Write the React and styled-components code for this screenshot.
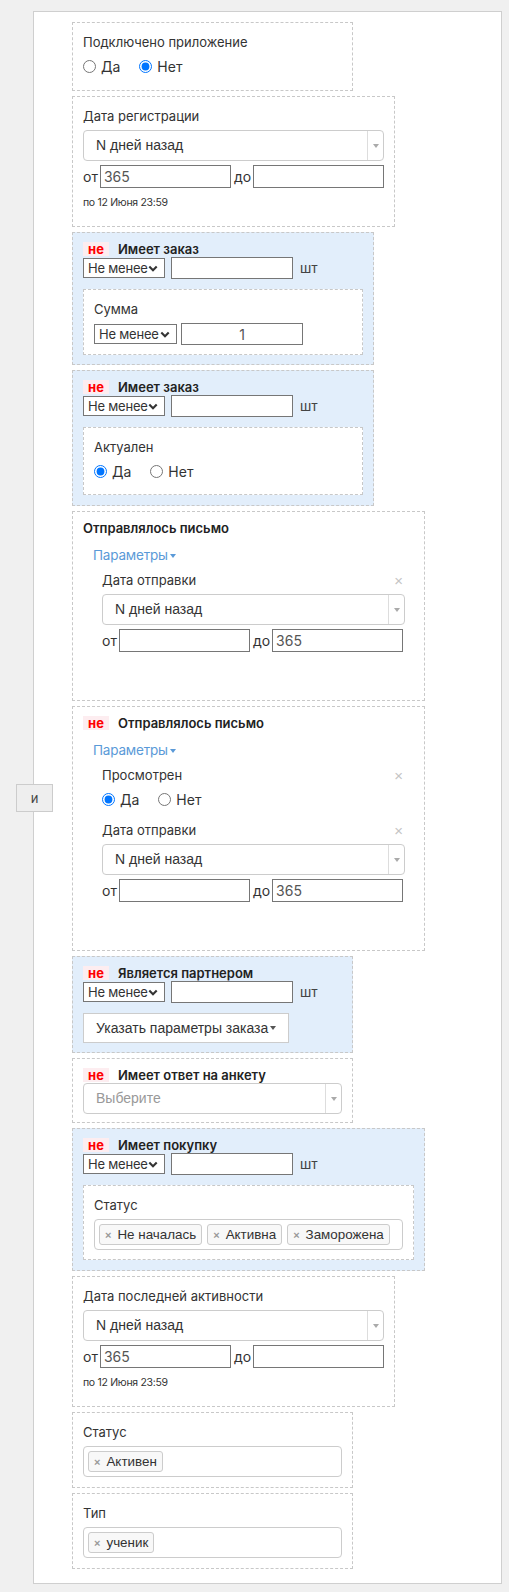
import React from 'react';
import styled, { createGlobalStyle } from 'styled-components';

const GlobalStyle = createGlobalStyle`
  body {
    margin: 0;
    background: #f0f0f0;
    font-family: Inter, "Noto Sans", sans-serif;
    color: #333;
  }
  * { box-sizing: border-box; }
`;

const Page = styled.div`
  padding: 11px 7px 3px 33px;
`;

const Panel = styled.div`
  position: relative;
  background: #fff;
  border: 1px solid #cfcfcf;
  padding: 10px 0 14px 38px;
`;

// "и" toggle sits over the panel's left edge
const AndButton = styled.div`
  position: absolute;
  left: -18px;
  top: 50%;
  transform: translateY(-50%);
  width: 37px;
  height: 28px;
  border: 1px solid #ccc;
  background: #eee;
  display: flex;
  align-items: center;
  justify-content: center;
  font-size: 13px;
  color: #444;
`;

const Stack = styled.div`
  display: flex;
  flex-direction: column;
  align-items: flex-start;
  gap: 5px;
`;

const Block = styled.div`
  width: ${p => p.$w}px;
  border: 1px dashed #c8c8c8;
  background: ${p => (p.$blue ? '#e2eefb' : '#fff')};
  padding: ${p => (p.$head ? '8px 10px 9px' : '9px 10px 10px')};
  ${p => (p.$pb != null ? `padding-bottom: ${p.$pb}px;` : '')}
`;

const SubBlock = styled.div`
  margin-top: 10px;
  border: 1px dashed #c8c8c8;
  background: #fff;
  padding: 9px 10px 9px;
`;

const Label = styled.div`
  font-size: 13px;
  line-height: 20px;
  color: #333;
`;

const Header = styled.div`
  display: flex;
  align-items: center;
  height: 16px;
`;

const NotBadge = styled.span`
  width: 26px;
  height: 14px;
  margin-right: 9px;
  background: #fdedf0;
  color: #f00;
  font-weight: 700;
  font-size: 13px;
  line-height: 14px;
  text-align: center;
`;

const Title = styled.span`
  font-weight: 600;
  font-size: 13px;
  color: #222;
`;

const RadioRow = styled.div`
  display: flex;
  align-items: center;
  height: 20px;
  margin: 4px 0 4px;
  font-size: 14px;
`;

const RadioOption = styled.label`
  display: flex;
  align-items: center;
  margin-right: 19px;
  color: #333;

  input {
    margin: 0 5px 0 0;
    width: 13px;
    height: 13px;
  }
`;

const CountRow = styled.div`
  display: flex;
  align-items: center;
  height: 22px;
  margin-top: ${p => (p.$mt ? p.$mt : 0)}px;
`;

// looks like the browser's native select with its chevron
const CountSelect = styled.div`
  display: flex;
  align-items: center;
  justify-content: space-between;
  width: ${p => p.$w || 82}px;
  height: 20px;
  margin-right: ${p => p.$gap || 6}px;
  padding: 0 6px 0 4px;
  border: 1px solid #767676;
  background: #fff;
  font-size: 13px;
  letter-spacing: -0.2px;
  color: #333;
  white-space: nowrap;
`;

const CountInput = styled.input`
  width: 122px;
  height: 22px;
  border: 1px solid #767676;
  padding: 0 4px;
  font-family: Inter, sans-serif;
  font-size: 14px;
  color: #555;
  text-align: ${p => (p.$center ? 'center' : 'left')};
`;

const Unit = styled.span`
  margin-left: 7px;
  font-family: "Liberation Sans", Arial, sans-serif;
  font-size: 14px;
  color: #444;
`;

const Choice = styled.div`
  display: flex;
  height: 31px;
  margin-top: ${p => (p.$mt != null ? p.$mt : 4)}px;
  border: 1px solid #ccc;
  border-radius: 4px;
  background: #fff;
`;

const ChoiceText = styled.div`
  flex: 1;
  padding-left: 12px;
  line-height: 29px;
  font-family: "Liberation Sans", Arial, sans-serif;
  font-size: 14px;
  color: ${p => (p.$placeholder ? '#999' : '#333')};
`;

const ChoiceArrow = styled.div`
  width: 16px;
  border-left: 1px solid #ddd;
  display: flex;
  align-items: center;
  justify-content: center;

  &::after {
    content: '';
    border-top: 4px solid #aaa;
    border-left: 3px solid transparent;
    border-right: 3px solid transparent;
  }
`;

const RangeRow = styled.div`
  display: flex;
  align-items: center;
  height: 23px;
  margin-top: 4px;
`;

const RangeLabel = styled.span`
  font-size: 14px;
  color: #333;
  margin: 0 2px 0 ${p => (p.$first ? 0 : 3)}px;
`;

const RangeInput = styled.input`
  width: 131px;
  height: 23px;
  border: 1px solid #767676;
  padding: 0 3px;
  font-family: Inter, sans-serif;
  font-size: 14px;
  color: #555;
`;

const Hint = styled.div`
  margin: 8px 0 6px;
  font-size: 10.5px;
  letter-spacing: -0.3px;
  line-height: 14px;
  color: #333;
`;

const TagBox = styled.div`
  display: flex;
  align-items: center;
  gap: 5px;
  height: 31px;
  margin-top: 4px;
  padding: 0 4px;
  border: 1px solid #ccc;
  border-radius: 4px;
  background: #fff;
`;

const Tag = styled.span`
  display: flex;
  align-items: center;
  flex-shrink: 0;
  height: 21px;
  padding: 0 5px;
  border: 1px solid #ccc;
  border-radius: 3px;
  background: #f8f8f8;
  font-family: "Liberation Sans", Arial, sans-serif;
  font-size: 13.4px;
  color: #333;
  white-space: nowrap;
`;

const TagX = styled.span`
  margin-right: 6px;
  font-size: 11px;
  font-weight: 700;
  color: #999;
`;

const Caret = styled.span`
  display: inline-block;
  margin-left: 2px;
  border-top: 4px solid ${p => p.$color || '#555'};
  border-left: 3px solid transparent;
  border-right: 3px solid transparent;
  vertical-align: middle;
`;

const DropButton = styled.button`
  display: inline-flex;
  align-items: center;
  height: 30px;
  margin-top: 10px;
  padding: 0 12px;
  border: 1px solid #ccc;
  background: #fff;
  font-family: "Liberation Sans", Arial, sans-serif;
  font-size: 14px;
  color: #333;
`;

const ParamsLink = styled.div`
  margin: 9px 0 0 10px;
  line-height: 20px;
  font-size: 13.5px;
  letter-spacing: -0.2px;
  color: #5a9ad8;
`;

const ParamList = styled.div`
  margin: 0 9px 0 19px;
  padding-bottom: 28px;
`;

const ParamItem = styled.div`
  margin-top: ${p => (p.$first ? 5 : 0)}px;
  margin-bottom: 11px;
`;

const ParamHead = styled.div`
  display: flex;
  justify-content: space-between;
  align-items: center;
`;

const Close = styled.span`
  margin-right: 2px;
  font-family: "Liberation Sans", Arial, sans-serif;
  font-size: 15px;
  color: #c4c4c4;
`;

const Chevron = () => (
  <svg width="10" height="7" viewBox="0 0 10 7">
    <polyline points="1.3,1.5 5,5.2 8.7,1.5" fill="none" stroke="#333" strokeWidth="2.1" />
  </svg>
);

const Not = () => <NotBadge>не</NotBadge>;

const Radios = ({ name, value }) => (
  <RadioRow>
    <RadioOption>
      <input type="radio" name={name} defaultChecked={value === 'yes'} />Да
    </RadioOption>
    <RadioOption>
      <input type="radio" name={name} defaultChecked={value === 'no'} />Нет
    </RadioOption>
  </RadioRow>
);

const MinSelect = ({ w, gap }) => (
  <CountSelect $w={w} $gap={gap}>
    Не менее
    <Chevron />
  </CountSelect>
);

const Count = () => (
  <CountRow>
    <MinSelect />
    <CountInput />
    <Unit>шт</Unit>
  </CountRow>
);

const Range = ({ from = '', to = '' }) => (
  <RangeRow>
    <RangeLabel $first>от</RangeLabel>
    <RangeInput defaultValue={from} />
    <RangeLabel>до</RangeLabel>
    <RangeInput defaultValue={to} />
  </RangeRow>
);

const Select2 = ({ text, placeholder, mt }) => (
  <Choice $mt={mt}>
    <ChoiceText $placeholder={placeholder}>{text}</ChoiceText>
    <ChoiceArrow />
  </Choice>
);

const Tags = ({ items }) => (
  <TagBox>
    {items.map(t => (
      <Tag key={t}><TagX>×</TagX>{t}</Tag>
    ))}
  </TagBox>
);

const App = () => {
  return (
    <>
      <GlobalStyle />
      <Page>
        <Panel>
          <AndButton>и</AndButton>
          <Stack>
            <Block $w={281}>
              <Label>Подключено приложение</Label>
              <Radios name="app" value="no" />
            </Block>

            <Block $w={323}>
              <Label>Дата регистрации</Label>
              <Select2 text="N дней назад" />
              <Range from="365" />
              <Hint>по 12 Июня 23:59</Hint>
            </Block>

            <Block $w={302} $blue $head>
              <Header><Not /><Title>Имеет заказ</Title></Header>
              <Count />
              <SubBlock>
                <Label>Сумма</Label>
                <CountRow $mt={4}>
                  <MinSelect w={83} gap={4} />
                  <CountInput $center defaultValue="1" />
                </CountRow>
              </SubBlock>
            </Block>

            <Block $w={302} $blue $head $pb={10}>
              <Header><Not /><Title>Имеет заказ</Title></Header>
              <Count />
              <SubBlock>
                <Label>Актуален</Label>
                <Radios name="actual" value="yes" />
              </SubBlock>
            </Block>

            <Block $w={353} $head>
              <Header><Title>Отправлялось письмо</Title></Header>
              <ParamsLink>Параметры<Caret $color="#5a9ad8" /></ParamsLink>
              <ParamList>
                <ParamItem $first>
                  <ParamHead><Label>Дата отправки</Label><Close>×</Close></ParamHead>
                  <Select2 text="N дней назад" />
                  <Range to="365" />
                </ParamItem>
              </ParamList>
            </Block>

            <Block $w={353} $head>
              <Header><Not /><Title>Отправлялось письмо</Title></Header>
              <ParamsLink>Параметры<Caret $color="#5a9ad8" /></ParamsLink>
              <ParamList>
                <ParamItem $first>
                  <ParamHead><Label>Просмотрен</Label><Close>×</Close></ParamHead>
                  <Radios name="seen" value="yes" />
                </ParamItem>
                <ParamItem>
                  <ParamHead><Label>Дата отправки</Label><Close>×</Close></ParamHead>
                  <Select2 text="N дней назад" />
                  <Range to="365" />
                </ParamItem>
              </ParamList>
            </Block>

            <Block $w={281} $blue $head>
              <Header><Not /><Title>Является партнером</Title></Header>
              <Count />
              <DropButton>Указать параметры заказа<Caret /></DropButton>
            </Block>

            <Block $w={281} $head $pb={8}>
              <Header><Not /><Title>Имеет ответ на анкету</Title></Header>
              <Select2 text="Выберите" placeholder mt={0} />
            </Block>

            <Block $w={353} $blue $head $pb={10}>
              <Header><Not /><Title>Имеет покупку</Title></Header>
              <Count />
              <SubBlock>
                <Label>Статус</Label>
                <Tags items={['Не началась', 'Активна', 'Заморожена']} />
              </SubBlock>
            </Block>

            <Block $w={323}>
              <Label>Дата последней активности</Label>
              <Select2 text="N дней назад" />
              <Range from="365" />
              <Hint>по 12 Июня 23:59</Hint>
            </Block>

            <Block $w={281}>
              <Label>Статус</Label>
              <Tags items={['Активен']} />
            </Block>

            <Block $w={281}>
              <Label>Тип</Label>
              <Tags items={['ученик']} />
            </Block>
          </Stack>
        </Panel>
      </Page>
    </>
  );
};

export default App;
